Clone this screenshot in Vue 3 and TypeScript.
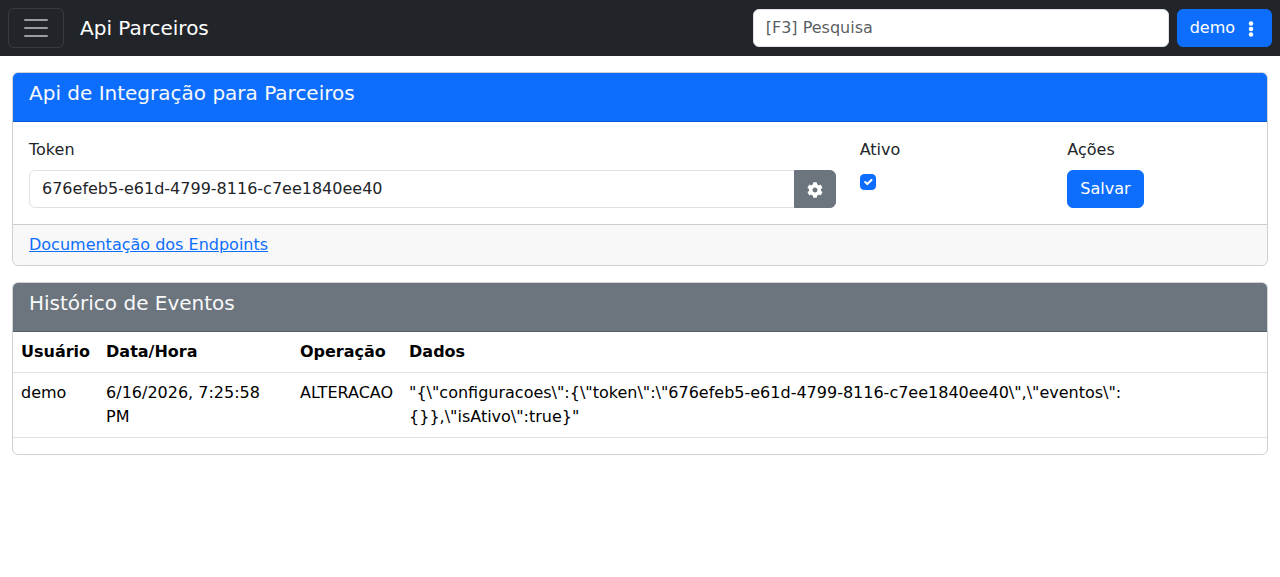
<script setup lang="ts">
import { ref } from 'vue'

interface EventRow {
  user: string
  date: string
  operation: string
  data: string
}

const token = ref('676efeb5-e61d-4799-8116-c7ee1840ee40')
const active = ref(true)
const search = ref('')
const events: EventRow[] = [
  {
    user: 'demo',
    date: '6/16/2026, 7:25:58 PM',
    operation: 'ALTERACAO',
    data: '"{\\"configuracoes\\":{\\"token\\":\\"676efeb5-e61d-4799-8116-c7ee1840ee40\\",\\"eventos\\":{}},\\"isAtivo\\":true}"',
  },
]
</script>

<template>
  <div class="page">
    <nav class="navbar">
      <button class="toggler" type="button" aria-label="Menu">
        <svg viewBox="0 0 30 30" width="30" height="30">
          <path stroke="rgba(255,255,255,.55)" stroke-linecap="round" stroke-miterlimit="10" stroke-width="2" d="M4 7h22M4 15h22M4 23h22" />
        </svg>
      </button>
      <span class="brand">Api Parceiros</span>
      <input v-model="search" class="control search" placeholder="[F3] Pesquisa" />
      <button class="btn user" type="button">
        demo
        <svg class="dots" viewBox="0 0 16 16" width="16" height="16" fill="currentColor">
          <circle cx="8" cy="2.5" r="2.25" /><circle cx="8" cy="8" r="2.25" /><circle cx="8" cy="13.5" r="2.25" />
        </svg>
      </button>
    </nav>

    <main>
      <section class="card">
        <header class="card-header primary"><h5>Api de Integração para Parceiros</h5></header>
        <div class="card-body">
          <div class="col token">
            <label for="token">Token</label>
            <div class="group">
              <input id="token" v-model="token" class="control" />
              <button class="btn gear" type="button" aria-label="Gerar token">
                <svg viewBox="0 0 512 512" width="16" height="16" fill="currentColor">
                  <path d="M487.4 315.7l-42.6-24.6c4.3-23.2 4.3-47 0-70.2l42.6-24.6c4.9-2.8 7.1-8.6 5.5-14-11.1-35.6-30-67.8-54.7-94.6-3.8-4.1-10-5.1-14.8-2.3L380.8 110c-17.9-15.4-38.5-27.3-60.8-35.1V25.8c0-5.6-3.9-10.5-9.4-11.7-36.7-8.2-74.3-7.8-109.2 0-5.5 1.2-9.4 6.1-9.4 11.7V75c-22.2 7.9-42.8 19.8-60.8 35.1L88.7 85.5c-4.9-2.8-11-1.9-14.8 2.3-24.7 26.7-43.6 58.9-54.7 94.6-1.7 5.4.6 11.2 5.5 14L67.3 221c-4.3 23.2-4.3 47 0 70.2l-42.6 24.6c-4.9 2.8-7.1 8.6-5.5 14 11.1 35.6 30 67.8 54.7 94.6 3.8 4.1 10 5.1 14.8 2.3l42.6-24.6c17.9 15.4 38.5 27.3 60.8 35.1v49.2c0 5.6 3.9 10.5 9.4 11.7 36.7 8.2 74.3 7.8 109.2 0 5.5-1.2 9.4-6.1 9.4-11.7v-49.2c22.2-7.9 42.8-19.8 60.8-35.1l42.6 24.6c4.9 2.8 11 1.9 14.8-2.3 24.7-26.7 43.6-58.9 54.7-94.6 1.5-5.5-.7-11.3-5.6-14.1zM256 336c-44.1 0-80-35.9-80-80s35.9-80 80-80 80 35.9 80 80-35.9 80-80 80z" />
                </svg>
              </button>
            </div>
          </div>
          <div class="col">
            <label for="active">Ativo</label>
            <input id="active" v-model="active" class="check" type="checkbox" />
          </div>
          <div class="col">
            <label>Ações</label>
            <button class="btn" type="button">Salvar</button>
          </div>
        </div>
        <footer class="card-footer"><a href="#">Documentação dos Endpoints</a></footer>
      </section>

      <section class="card">
        <header class="card-header secondary"><h5>Histórico de Eventos</h5></header>
        <table>
          <thead>
            <tr><th>Usuário</th><th>Data/Hora</th><th>Operação</th><th>Dados</th></tr>
          </thead>
          <tbody>
            <tr v-for="event in events" :key="event.date">
              <td>{{ event.user }}</td>
              <td>{{ event.date }}</td>
              <td>{{ event.operation }}</td>
              <td>{{ event.data }}</td>
            </tr>
          </tbody>
        </table>
      </section>
    </main>
  </div>
</template>

<style>
body {
  margin: 0;
  background: #fff;
}
</style>

<style scoped>
.page,
.page * {
  box-sizing: border-box;
}
.page {
  color: #212529;
  font: 400 16px/1.5 "DejaVu Sans", "Noto Sans", sans-serif;
}
.navbar {
  display: flex;
  align-items: center;
  height: 56px;
  padding: 0 8px;
  background: #212529;
}
.toggler {
  display: flex;
  width: 56px;
  height: 40px;
  padding: 4px 12px;
  border: 1px solid rgba(255, 255, 255, 0.1);
  border-radius: 6px;
  background: transparent;
}
.brand {
  margin-left: 16px;
  font-size: 20px;
  color: #fff;
}
.control {
  height: 38px;
  min-width: 0;
  padding: 5px 12px 7px;
  border: 1px solid #dee2e6;
  border-radius: 6px;
  background: #fff;
  color: #212529;
  font: inherit;
  outline: 0;
}
.control::placeholder {
  color: rgba(33, 37, 41, 0.75);
  opacity: 1;
}
.search {
  width: 416px;
  margin: 0 8px 0 auto;
}
.btn {
  height: 38px;
  padding: 6px 12px;
  border: 1px solid #0d6efd;
  border-radius: 6px;
  background: #0d6efd;
  color: #fff;
  font: inherit;
}
.user {
  display: flex;
  align-items: center;
  width: 95.3px;
}
.dots {
  flex: none;
  margin: 1px 0 0 8px;
}
main {
  padding: 16px 12px;
}
.card {
  margin-bottom: 16px;
  border: 1px solid rgba(0, 0, 0, 0.175);
  border-radius: 6px;
}
.card-header {
  padding: 8px 16px;
  border-bottom: 1px solid rgba(0, 0, 0, 0.175);
  border-radius: 5px 5px 0 0;
  color: #f8f9fa;
}
.card-header h5 {
  margin: 0 0 8px;
  font-size: 20px;
  font-weight: 400;
  line-height: 24px;
}
.primary {
  background: #0d6efd;
}
.secondary {
  background: #6c757d;
}
.card-body {
  display: grid;
  grid-template-columns: 8fr 2fr 2fr;
  padding: 16px 4px;
}
.col {
  padding: 0 12px;
}
.col label {
  display: block;
  height: 24px;
  margin-bottom: 8px;
}
.group {
  display: flex;
}
.group .control {
  flex: 1;
  border-radius: 6px 0 0 6px;
}
.gear {
  display: flex;
  align-items: center;
  width: 42px;
  margin-left: -1px;
  border-color: #6c757d;
  border-radius: 0 6px 6px 0;
  background: #6c757d;
}
.gear svg {
  margin-top: 2px;
}
.check {
  display: block;
  width: 16px;
  height: 16px;
  margin: 12px 0 0;
  appearance: none;
  border: 1px solid #dee2e6;
  border-radius: 4px;
}
.check:checked {
  border-color: #0d6efd;
  background: #0d6efd url("data:image/svg+xml,%3csvg xmlns='http://www.w3.org/2000/svg' viewBox='0 0 20 20'%3e%3cpath fill='none' stroke='%23fff' stroke-linecap='round' stroke-linejoin='round' stroke-width='3' d='m6 10 3 3 6-6'/%3e%3c/svg%3e") center / contain no-repeat;
}
.card-footer {
  padding: 8px 16px;
  border-top: 1px solid rgba(0, 0, 0, 0.175);
  border-radius: 0 0 5px 5px;
  background: rgba(33, 37, 41, 0.03);
}
a {
  color: #0d6efd;
}
table {
  width: 100%;
  margin-bottom: 16px;
  border-collapse: collapse;
  color: #000;
}
th,
td {
  padding: 8px;
  border-bottom: 1px solid #dee2e6;
  text-align: left;
  vertical-align: top;
}
</style>
